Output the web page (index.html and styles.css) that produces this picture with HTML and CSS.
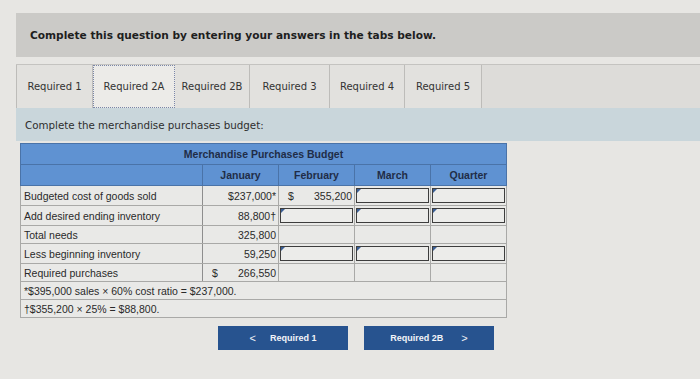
FILE: index.html
```html
<!DOCTYPE html>
<html>
<head>
<meta charset="utf-8">
<link rel="stylesheet" href="styles.css">
</head>
<body>
<div class="page">
  <div class="instr">Complete this question by entering your answers in the tabs below.</div>
  <div class="tabs">
    <div class="tab t1">Required 1</div>
    <div class="tab active">Required 2A</div>
    <div class="tab t3">Required 2B</div>
    <div class="tab t4">Required 3</div>
    <div class="tab t5">Required 4</div>
    <div class="tab t6">Required 5</div>
  </div>
  <div class="band">Complete the merchandise purchases budget:</div>
  <div class="panel">
    <table class="budget">
      <colgroup>
        <col class="c-label"><col class="c-num"><col class="c-num"><col class="c-num"><col class="c-num">
      </colgroup>
      <tr class="hd"><th colspan="5" class="title">Merchandise Purchases Budget</th></tr>
      <tr class="hd"><th class="blank"></th><th>January</th><th>February</th><th>March</th><th>Quarter</th></tr>
      <tr>
        <td class="lbl">Budgeted cost of goods sold</td>
        <td class="num">$237,000*</td>
        <td class="num"><span class="cur">$</span>355,200</td>
        <td class="inp"><div class="box"></div></td>
        <td class="inp"><div class="box"></div></td>
      </tr>
      <tr>
        <td class="lbl">Add desired ending inventory</td>
        <td class="num">88,800†</td>
        <td class="inp"><div class="box"></div></td>
        <td class="inp"><div class="box"></div></td>
        <td class="inp"><div class="box"></div></td>
      </tr>
      <tr>
        <td class="lbl">Total needs</td>
        <td class="num">325,800</td>
        <td></td><td></td><td></td>
      </tr>
      <tr>
        <td class="lbl">Less beginning inventory</td>
        <td class="num">59,250</td>
        <td class="inp"><div class="box"></div></td>
        <td class="inp"><div class="box"></div></td>
        <td class="inp"><div class="box"></div></td>
      </tr>
      <tr>
        <td class="lbl">Required purchases</td>
        <td class="num"><span class="cur">$</span>266,550</td>
        <td></td><td></td><td></td>
      </tr>
      <tr><td colspan="5" class="note">*$395,000 sales × 60% cost ratio = $237,000.</td></tr>
      <tr><td colspan="5" class="note">†$355,200 × 25% = $88,800.</td></tr>
    </table>
    <div class="nav">
      <div class="btn"><span class="chev">&lt;</span>Required 1</div>
      <div class="btn">Required 2B<span class="chev right">&gt;</span></div>
    </div>
  </div>
</div>
</body>
</html>
```
FILE: styles.css
```css
html, body {
  margin: 0;
  padding: 0;
}
body {
  background: #e7e6e3;
  width: 700px;
  height: 379px;
  overflow: hidden;
}
.page {
  padding-top: 13px;
  padding-left: 16px;
}
.instr {
  height: 44px;
  background: #cbcac7;
  padding-left: 14px;
  display: flex;
  align-items: center;
  font-family: "DejaVu Sans", Verdana, sans-serif;
  font-weight: bold;
  font-size: 10.6px;
  color: #1e1e1e;
}
.tabs {
  margin-top: 7px;
  height: 43px;
  background: #dddcd9;
  display: flex;
  border-top: 1px solid #c4c3c0;
}
.tab {
  width: 76px;
  box-sizing: border-box;
  border-right: 1px solid #bdbcb9;
  display: flex;
  align-items: center;
  justify-content: center;
  font-family: "DejaVu Sans", Verdana, sans-serif;
  font-size: 10px;
  color: #333;
  background: #e2e1de;
}
.tab.t1 {
  border-left: 1px solid #bdbcb9;
  width: 77px;
}
.tab.active {
  background: #ecebe8;
  border: 1px dotted #7a86a8;
  width: 82px;
}
.tab.t3 { width: 75px; }
.tab.t4 { width: 80px; }
.tab.t5 { width: 75px; }
.tab.t6 { width: 77px; }
.band {
  height: 33px;
  background: #c9d6db;
  padding-left: 9px;
  display: flex;
  align-items: center;
  font-family: "DejaVu Sans", Verdana, sans-serif;
  font-size: 10.3px;
  color: #2e2e2e;
}
.panel {
  padding-top: 2px;
  padding-left: 4px;
}
.budget {
  border-collapse: collapse;
  width: 487px;
  font-family: "Liberation Sans", Arial, sans-serif;
  font-size: 10.5px;
  color: #2a2a2a;
  background: #e9e9e7;
  border: 1px solid #8e8e8e;
}
.c-label { width: 182px; }
.c-num { width: 76px; }
.hd th {
  background: #5f92d2;
  height: 20px;
  padding: 0;
  font-weight: bold;
  color: #1f2d47;
  border: 1px solid #4a73a8;
  text-align: center;
}
.hd th.title {
  border-bottom: 1px solid #4a73a8;
}
td {
  height: 17px;
  padding: 0;
  border: 1px solid #a9a9a7;
  line-height: 12px;
}
td.lbl {
  padding-left: 3px;
  border-right: 1px solid #8e8e8e;
}
td.num {
  text-align: right;
  padding-right: 2px;
}
.cur {
  float: left;
  padding-left: 9px;
}
td.inp {
  padding: 1px;
}
.box {
  height: 13px;
  border: 1px solid #3d3d3d;
  position: relative;
  background: #ececea;
}
.box::before {
  content: "";
  position: absolute;
  left: 0;
  top: 0;
  border-top: 4px solid #3b5f95;
  border-right: 4px solid transparent;
}
td.note {
  padding-left: 3px;
}
.nav {
  display: flex;
  gap: 16px;
  margin-top: 8px;
  padding-left: 198px;
}
.btn {
  width: 130px;
  height: 24px;
  background: #27538f;
  color: #f2f4f8;
  font-family: "Liberation Sans", Arial, sans-serif;
  font-weight: bold;
  font-size: 9px;
  display: flex;
  align-items: center;
  justify-content: center;
}
.chev {
  font-weight: normal;
  font-size: 11px;
  margin-right: 14px;
}
.chev.right {
  margin-right: 0;
  margin-left: 18px;
}
```
